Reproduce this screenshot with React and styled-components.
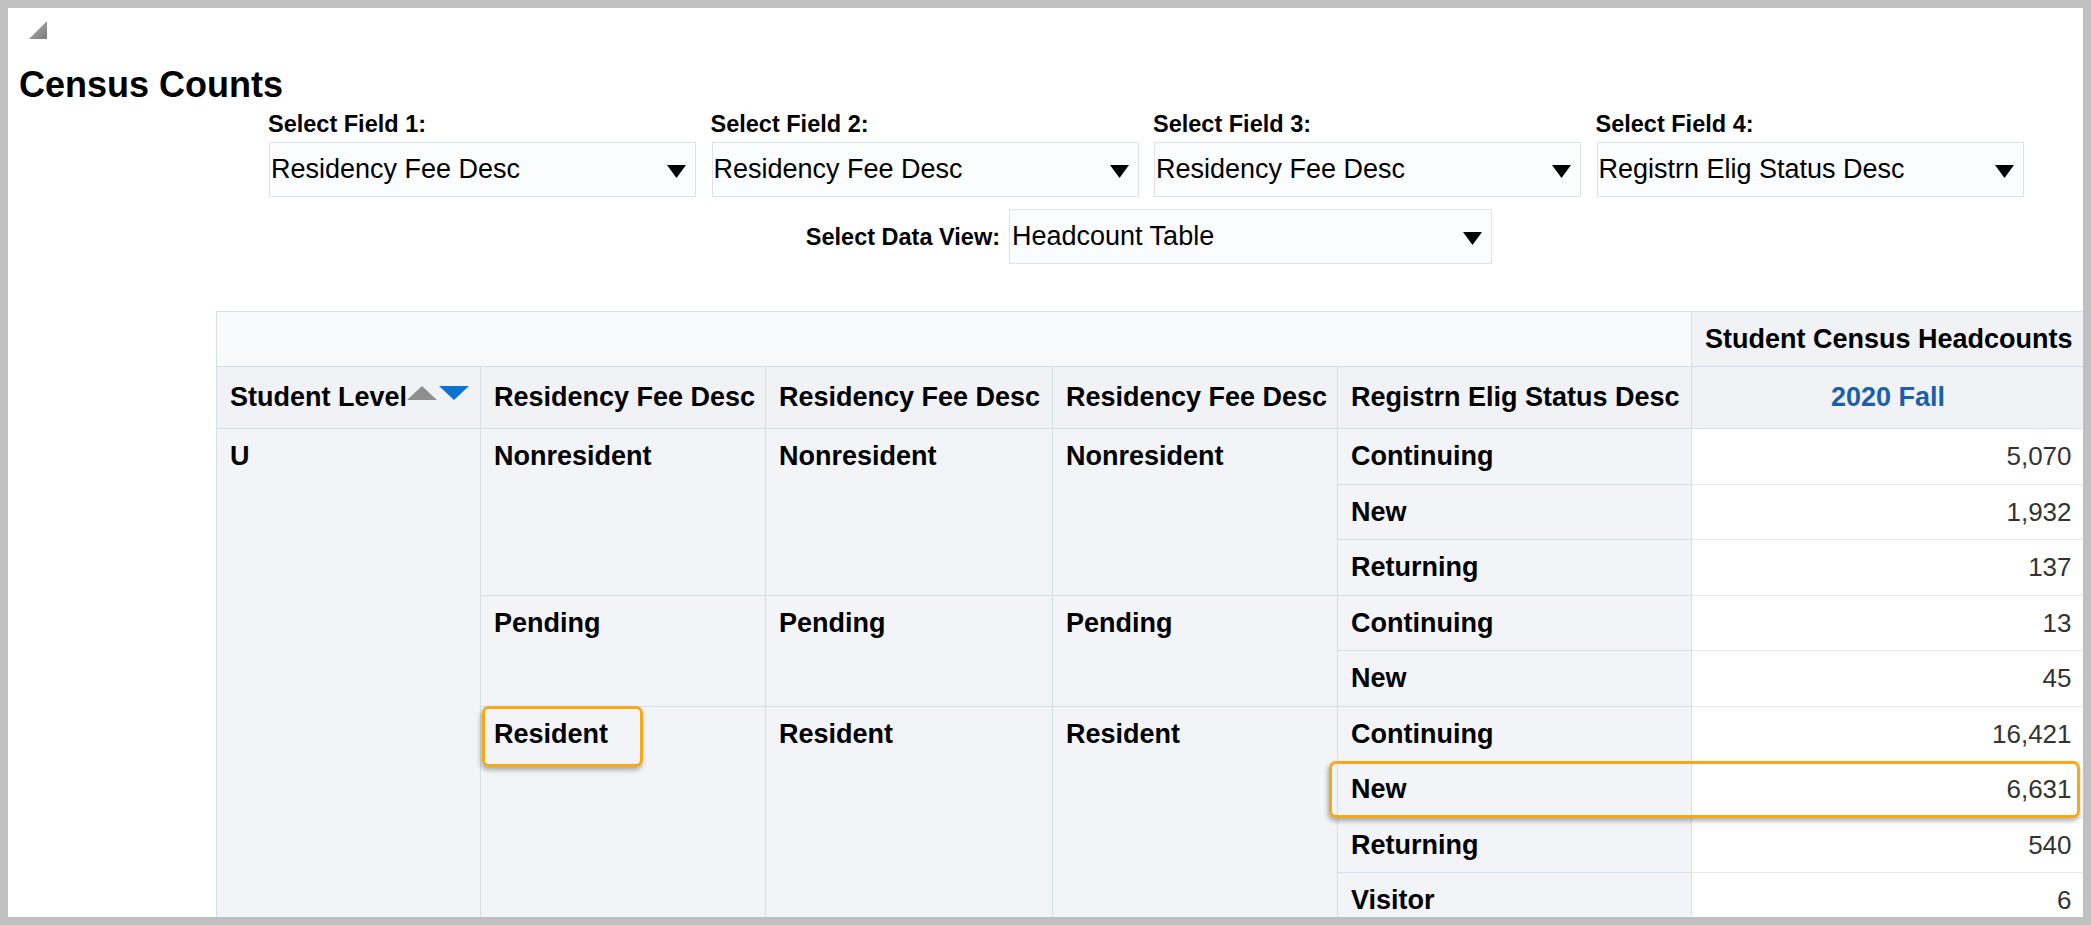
import React from 'react';
import styled, { createGlobalStyle } from 'styled-components';

const GlobalStyle = createGlobalStyle`
  html, body { margin: 0; padding: 0; }
  body {
    background: #c0c0c0;
    font-family: "Liberation Sans", Arial, sans-serif;
    color: #000;
  }
  #root { padding: 8px; }
`;

const FONT = `"Liberation Sans", Arial, sans-serif`;

const Page = styled.div`
  background: #ffffff;
  height: 909px;
  overflow: hidden;
`;

const TopBar = styled.div`
  height: 57px;
  box-sizing: border-box;
  padding: 13px 0 0 21px;
`;

const Title = styled.h1`
  margin: 0;
  padding-left: 11px;
  font: bold 36px/40px ${FONT};
  color: #000;
`;

const FieldsRow = styled.div`
  display: flex;
  gap: 15.5px;
  padding-left: 261px;
  margin-top: 5px;
`;

const Field = styled.div`
  display: flex;
  flex-direction: column;
  width: 427px;
`;

const FieldLabel = styled.label`
  font: bold 23.5px/28px ${FONT};
  color: #000;
  margin: 0 0 4px -1px;
  white-space: nowrap;
`;

const SelectBox = styled.div`
  box-sizing: border-box;
  height: 55px;
  width: ${p => p.$width || 427}px;
  border: 1px solid #dde3e8;
  background: #fbfcfd;
  display: flex;
  align-items: center;
  justify-content: space-between;
  padding: 0 9px 0 ${p => p.$padLeft || 1}px;
  font: 27px/31px ${FONT};
  color: #000;
  white-space: nowrap;
`;

const ArrowIcon = styled.svg`
  flex: none;
  margin-top: 4px;
`;

const DataViewRow = styled.div`
  display: flex;
  align-items: center;
  gap: 9px;
  margin-top: 12px;
`;

const DataViewLabel = styled.label`
  flex: 0 0 992px;
  text-align: right;
  font: bold 23.5px/28px ${FONT};
  color: #000;
  white-space: nowrap;
`;

const TableWrap = styled.div`
  margin: 47px 0 0 208px;
`;

const Grid = styled.table`
  border-collapse: collapse;
  table-layout: fixed;
  width: 1868px;
  font-family: ${FONT};
  font-size: 27px;
  line-height: 31px;
`;

const Row = styled.tr`
  height: ${p => p.$h}px;
`;

const CornerCell = styled.th`
  background: #f7f9fb;
  border: 1px solid #d5dfe7;
`;

const ColHead = styled.th`
  background: #f0f2f5;
  border: 1px solid #d5dfe7;
  text-align: ${p => (p.$center ? 'center' : 'left')};
  padding: 0 13px;
  font-weight: bold;
  color: ${p => (p.$link ? '#1d5fa6' : '#000')};
  white-space: nowrap;
  vertical-align: middle;
`;

const RowHead = styled.td`
  position: relative;
  background: #f2f4f7;
  border: 1px solid #d5dfe7;
  vertical-align: top;
  padding: 12px 13px 10px;
  font-weight: bold;
  color: #000;
  white-space: nowrap;
`;

const ValueCell = styled.td`
  background: #ffffff;
  border-top: 1px solid #e6eaee;
  border-bottom: 1px solid #e6eaee;
  border-left: 1px solid #e9edf1;
  text-align: right;
  vertical-align: top;
  padding: 12px 13px 10px;
  font-weight: normal;
  font-size: 26px;
  color: #333333;
`;

const SortIcons = styled.svg`
  vertical-align: 6px;
`;

const Highlight = styled.div`
  position: absolute;
  top: ${p => p.$top}px;
  left: ${p => p.$left}px;
  width: ${p => p.$w}px;
  height: ${p => p.$h}px;
  box-sizing: border-box;
  border: 3px solid #f5a915;
  border-radius: 7px;
  box-shadow: -1px 3px 5px rgba(0, 0, 0, 0.32);
  pointer-events: none;
  z-index: 2;
`;

const Arrow = () => (
  <ArrowIcon width="19" height="13" viewBox="0 0 19 13">
    <polygon points="0,0 19,0 9.5,13" fill="#000" />
  </ArrowIcon>
);

const CornerIcon = () => (
  <svg width="18" height="18" viewBox="0 0 18 18">
    <defs>
      <linearGradient id="cg" x1="0" y1="0" x2="1" y2="1">
        <stop offset="0" stopColor="#b4b4b4" />
        <stop offset="1" stopColor="#7c7c7c" />
      </linearGradient>
    </defs>
    <polygon points="18,0 18,18 0,18" fill="url(#cg)" />
  </svg>
);

const Select = ({ value, width, padLeft }) => (
  <SelectBox $width={width} $padLeft={padLeft}>
    <span>{value}</span>
    <Arrow />
  </SelectBox>
);

const fields = [
  { label: 'Select Field 1:', value: 'Residency Fee Desc' },
  { label: 'Select Field 2:', value: 'Residency Fee Desc' },
  { label: 'Select Field 3:', value: 'Residency Fee Desc' },
  { label: 'Select Field 4:', value: 'Registrn Elig Status Desc' },
];

const DR = 55.5;

export default function App() {
  return (
    <>
      <GlobalStyle />
      <Page>
        <TopBar>
          <CornerIcon />
        </TopBar>
        <Title>Census Counts</Title>
        <FieldsRow>
          {fields.map(f => (
            <Field key={f.label}>
              <FieldLabel>{f.label}</FieldLabel>
              <Select value={f.value} />
            </Field>
          ))}
        </FieldsRow>
        <DataViewRow>
          <DataViewLabel>Select Data View:</DataViewLabel>
          <Select value="Headcount Table" width={483} padLeft={2} />
        </DataViewRow>
        <TableWrap>
          <Grid>
            <colgroup>
              <col style={{ width: 264 }} />
              <col style={{ width: 285 }} />
              <col style={{ width: 287 }} />
              <col style={{ width: 285 }} />
              <col style={{ width: 354 }} />
              <col style={{ width: 393 }} />
            </colgroup>
            <thead>
              <Row $h={55}>
                <CornerCell colSpan={5} />
                <ColHead $center>Student Census Headcounts</ColHead>
              </Row>
              <Row $h={62}>
                <ColHead>
                  Student Level
                  <SortIcons width="62" height="14" viewBox="0 0 62 14">
                    <polygon points="0,14 15,0 30,14" fill="#8f8f8f" />
                    <polygon points="32,0 62,0 47,14" fill="#0b73d3" />
                  </SortIcons>
                </ColHead>
                <ColHead>Residency Fee Desc</ColHead>
                <ColHead>Residency Fee Desc</ColHead>
                <ColHead>Residency Fee Desc</ColHead>
                <ColHead>Registrn Elig Status Desc</ColHead>
                <ColHead $center $link>2020 Fall</ColHead>
              </Row>
            </thead>
            <tbody>
              <Row $h={DR}>
                <RowHead rowSpan={9}>U</RowHead>
                <RowHead rowSpan={3}>Nonresident</RowHead>
                <RowHead rowSpan={3}>Nonresident</RowHead>
                <RowHead rowSpan={3}>Nonresident</RowHead>
                <RowHead>Continuing</RowHead>
                <ValueCell>5,070</ValueCell>
              </Row>
              <Row $h={DR}>
                <RowHead>New</RowHead>
                <ValueCell>1,932</ValueCell>
              </Row>
              <Row $h={DR}>
                <RowHead>Returning</RowHead>
                <ValueCell>137</ValueCell>
              </Row>
              <Row $h={DR}>
                <RowHead rowSpan={2}>Pending</RowHead>
                <RowHead rowSpan={2}>Pending</RowHead>
                <RowHead rowSpan={2}>Pending</RowHead>
                <RowHead>Continuing</RowHead>
                <ValueCell>13</ValueCell>
              </Row>
              <Row $h={DR}>
                <RowHead>New</RowHead>
                <ValueCell>45</ValueCell>
              </Row>
              <Row $h={DR}>
                <RowHead rowSpan={4}>
                  Resident
                  <Highlight $top={-1} $left={1} $w={161} $h={61} />
                </RowHead>
                <RowHead rowSpan={4}>Resident</RowHead>
                <RowHead rowSpan={4}>Resident</RowHead>
                <RowHead>Continuing</RowHead>
                <ValueCell>16,421</ValueCell>
              </Row>
              <Row $h={DR}>
                <RowHead>
                  New
                  <Highlight $top={-1} $left={-9} $w={751} $h={57} />
                </RowHead>
                <ValueCell>6,631</ValueCell>
              </Row>
              <Row $h={DR}>
                <RowHead>Returning</RowHead>
                <ValueCell>540</ValueCell>
              </Row>
              <Row $h={DR}>
                <RowHead>Visitor</RowHead>
                <ValueCell>6</ValueCell>
              </Row>
            </tbody>
          </Grid>
        </TableWrap>
      </Page>
    </>
  );
}
